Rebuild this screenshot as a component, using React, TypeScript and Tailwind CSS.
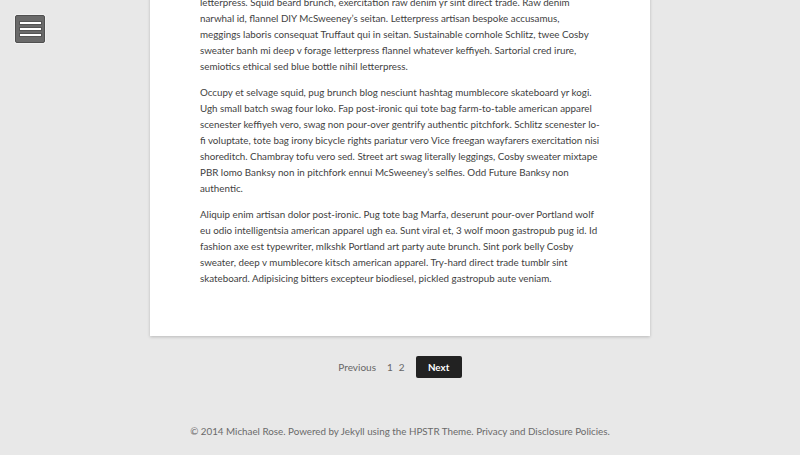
import React from "react";

const paras: string[][] = [
  [
    "letterpress. Squid beard brunch, exercitation raw denim yr sint direct trade. Raw denim",
    "narwhal id, flannel DIY McSweeney\u2019s seitan. Letterpress artisan bespoke accusamus,",
    "meggings laboris consequat Truffaut qui in seitan. Sustainable cornhole Schlitz, twee Cosby",
    "sweater banh mi deep v forage letterpress flannel whatever keffiyeh. Sartorial cred irure,",
    "semiotics ethical sed blue bottle nihil letterpress.",
  ],
  [
    "Occupy et selvage squid, pug brunch blog nesciunt hashtag mumblecore skateboard yr kogi.",
    "Ugh small batch swag four loko. Fap post-ironic qui tote bag farm-to-table american apparel",
    "scenester keffiyeh vero, swag non pour-over gentrify authentic pitchfork. Schlitz scenester lo-",
    "fi voluptate, tote bag irony bicycle rights pariatur vero Vice freegan wayfarers exercitation nisi",
    "shoreditch. Chambray tofu vero sed. Street art swag literally leggings, Cosby sweater mixtape",
    "PBR lomo Banksy non in pitchfork ennui McSweeney\u2019s selfies. Odd Future Banksy non",
    "authentic.",
  ],
  [
    "Aliquip enim artisan dolor post-ironic. Pug tote bag Marfa, deserunt pour-over Portland wolf",
    "eu odio intelligentsia american apparel ugh ea. Sunt viral et, 3 wolf moon gastropub pug id. Id",
    "fashion axe est typewriter, mlkshk Portland art party aute brunch. Sint pork belly Cosby",
    "sweater, deep v mumblecore kitsch american apparel. Try-hard direct trade tumblr sint",
    "skateboard. Adipisicing bitters excepteur biodiesel, pickled gastropub aute veniam.",
  ],
];

export default function App() {
  return (
    <div
      className="relative h-[455px] w-full overflow-hidden bg-[#e8e8e8] text-[#3f3f3f]"
      style={{ fontFamily: "Lato, 'Open Sans', sans-serif" }}
    >
      <button className="absolute left-[15px] top-[15px] flex h-[28px] w-[30px] flex-col items-center justify-center gap-[2px] rounded-[2px] border border-[#505050] bg-[#6a6a6a] shadow-[0_0_0_1px_rgba(255,255,255,0.4)]">
        <span className="block h-[4px] w-[23px] border border-[#555] bg-white" />
        <span className="block h-[4px] w-[23px] border border-[#555] bg-white" />
        <span className="block h-[4px] w-[23px] border border-[#555] bg-white" />
      </button>

      <div className="mx-auto mt-[-6px] w-[500px] bg-white px-[50px] pb-[50px] shadow-[0_1px_3px_rgba(0,0,0,0.2)]">
        <div className="flex flex-col gap-[10px] text-[9.8px] leading-[16px]">
          {paras.map((lines, i) => (
            <p key={i} className="whitespace-nowrap">
              {lines.map((l, j) => (
                <React.Fragment key={j}>
                  {l}
                  {j < lines.length - 1 && <br />}
                </React.Fragment>
              ))}
            </p>
          ))}
        </div>
      </div>

      <div className="mt-[20px] flex items-center justify-center text-[10px] text-[#666]">
        <span className="mr-[11px]">Previous</span>
        <span className="mr-[6px]">1</span>
        <span className="mr-[11px]">2</span>
        <span className="flex h-[22px] w-[46px] items-center justify-center rounded-[2px] bg-[#222] text-[9.8px] font-bold text-white">
          Next
        </span>
      </div>

      <div className="mt-[46px] text-center text-[9.8px] text-[#6a6a6a]">
        © 2014 Michael Rose. Powered by Jekyll using the HPSTR Theme. Privacy and Disclosure Policies.
      </div>
    </div>
  );
}
